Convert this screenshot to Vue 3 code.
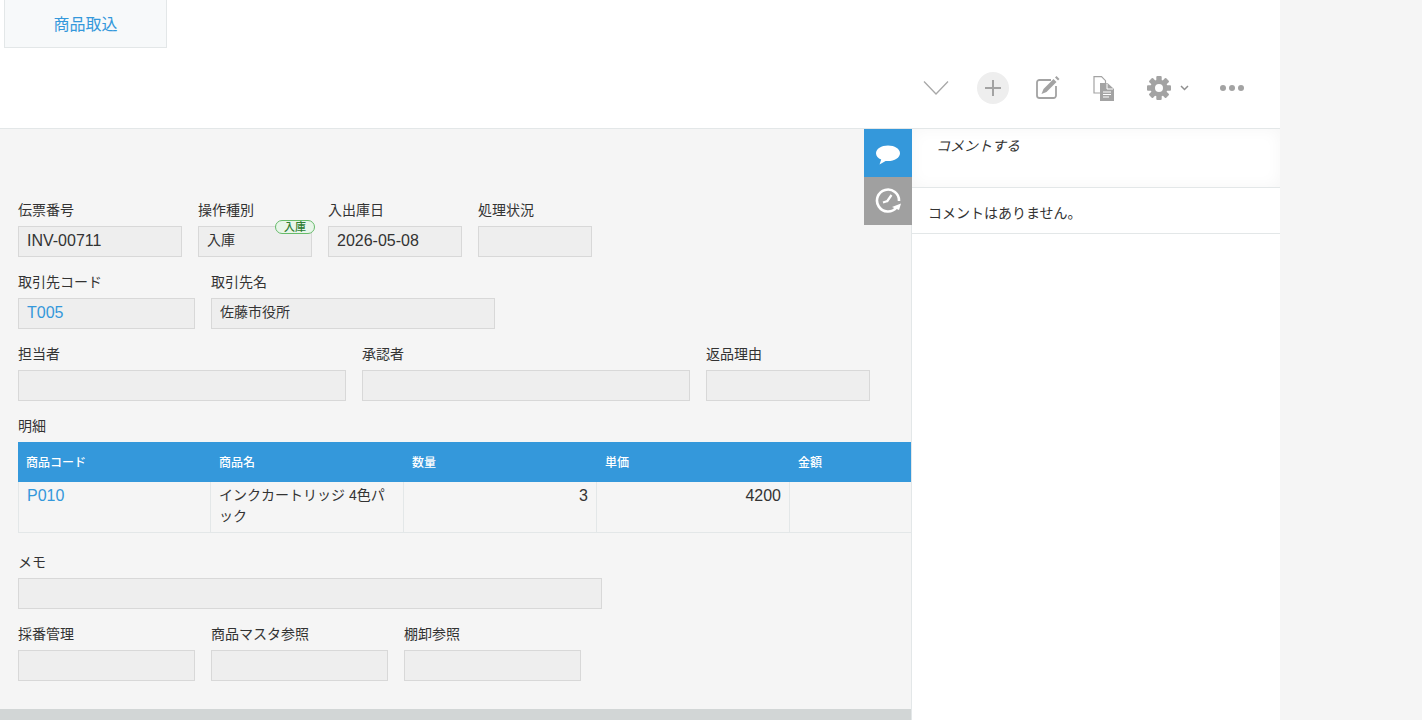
<template>
  <div class="page">
    <header class="top">
      <div class="tabs-row">
        <a class="import-btn">商品取込</a>
      </div>
      <div class="toolbar">
        <svg class="tool chevron" width="26" height="16" viewBox="0 0 26 16"><path d="M1 1.500 13 14 25 1.500" fill="none" stroke="#a8a8a8" stroke-width="1.300" /></svg>
        <span class="plus-circle">
          <svg width="18" height="18" viewBox="0 0 18 18"><path d="M9 1v16M1 9h16" stroke="#a3a3a3" stroke-width="2" fill="none" /></svg>
        </span>
        <svg class="tool edit" width="26" height="26" viewBox="0 0 26 26">
          <path d="M16 5H4.500A2.500 2.500 0 0 0 2 7.500v13A2.500 2.500 0 0 0 4.500 23h14a2.500 2.500 0 0 0 2.500-2.500V11" fill="none" stroke="#a3a3a3" stroke-width="1.800" />
          <path d="M6.500 19 8.500 14 18.500 4l3 3-10 10z" fill="#a3a3a3" />
          <path d="M20 2.500 21.500 1l3 3L23 5.500z" fill="#a3a3a3" />
        </svg>
        <svg class="tool doc" width="22" height="25" viewBox="0 0 22 25">
          <path d="M1 .7h7.500l4 4V17H1z" fill="#fff" stroke="#a3a3a3" stroke-width="1.200" />
          <path d="M7 7h7.500L21 13v12H7z" fill="#a3a3a3" />
          <path d="M14 7.500V13h6" fill="none" stroke="#fff" stroke-width="1" />
          <path d="M10 16h8M10 18.500h8M10 21h6" stroke="#fff" stroke-width="1.200" />
        </svg>
        <span class="gear-wrap">
          <svg width="24" height="24" viewBox="0 0 24 24">
            <circle cx="12" cy="12" r="6.300" fill="none" stroke="#a3a3a3" stroke-width="4.600" />
            <g fill="#a3a3a3">
              <rect x="9.300" y="0" width="5.400" height="5" rx="1" />
              <rect x="9.300" y="19" width="5.400" height="5" rx="1" />
              <rect x="0" y="9.300" width="5" height="5.400" rx="1" />
              <rect x="19" y="9.300" width="5" height="5.400" rx="1" />
              <rect x="9.300" y="0" width="5.400" height="5" rx="1" transform="rotate(45 12 12)" />
              <rect x="9.300" y="19" width="5.400" height="5" rx="1" transform="rotate(45 12 12)" />
              <rect x="0" y="9.300" width="5" height="5.400" rx="1" transform="rotate(45 12 12)" />
              <rect x="19" y="9.300" width="5" height="5.400" rx="1" transform="rotate(45 12 12)" />
            </g>
          </svg>
          <svg class="mini" width="9" height="6" viewBox="0 0 9 6"><path d="M1 1l3.500 3.500L8 1" fill="none" stroke="#8f8f8f" stroke-width="1.500" /></svg>
        </span>
        <svg class="tool dots" width="24" height="8" viewBox="0 0 24 8">
          <circle cx="3" cy="4" r="3" fill="#a3a3a3" />
          <circle cx="12" cy="4" r="3" fill="#a3a3a3" />
          <circle cx="21" cy="4" r="3" fill="#a3a3a3" />
        </svg>
      </div>
    </header>

    <div class="body">
      <main class="form">
        <div v-for="(row, i) in rows" :key="i" class="form-row">
          <div v-for="f in row" :key="f.label" class="field" :style="{ width: f.w + 'px' }">
            <div class="field-label">{{ f.label }}</div>
            <div class="field-value" :class="{ link: f.link, latin: f.latin }">{{ f.value }}</div>
            <span v-if="f.badge" class="badge">{{ f.badge }}</span>
          </div>
        </div>

        <div class="table-block">
          <div class="field-label">明細</div>
          <div class="table">
            <div class="thead">
              <div v-for="h in headers" :key="h" class="th">{{ h }}</div>
            </div>
            <div class="tbody">
              <div class="td link latin">P010</div>
              <div class="td">インクカートリッジ 4色パック</div>
              <div class="td num latin">3</div>
              <div class="td num latin">4200</div>
              <div class="td"></div>
            </div>
          </div>
        </div>

        <div v-for="(row, i) in rowsBottom" :key="'b' + i" class="form-row">
          <div v-for="f in row" :key="f.label" class="field" :style="{ width: f.w + 'px' }">
            <div class="field-label">{{ f.label }}</div>
            <div class="field-value"></div>
          </div>
        </div>

        <div class="footer-bar"></div>
      </main>

      <aside class="side">
        <div class="side-tabs">
          <div class="side-tab active">
            <svg width="26" height="22" viewBox="0 0 26 22">
              <path d="M13 1.500C6.400 1.500 1 4.900 1 9.200c0 2.700 2.100 5 5.200 6.400L4.500 20.500l6.100-3.600c.8.100 1.600.2 2.400.2 6.600 0 12-3.500 12-7.900S19.600 1.500 13 1.500z" fill="#fff" />
            </svg>
          </div>
          <div class="side-tab">
            <svg width="26" height="26" viewBox="0 0 26 26">
              <path d="M21.500 19.500A11 11 0 1 1 24 13" fill="none" stroke="#fff" stroke-width="2.600" />
              <path d="M26 15.500 24 22l-7-3z" fill="#fff" />
              <path d="M12 13.500 16.500 7M12.500 13 8 14.500" stroke="#fff" stroke-width="2.200" fill="none" />
            </svg>
          </div>
        </div>
        <div class="comment-box">
          <span class="comment-ph">コメントする</span>
        </div>
        <div class="no-comment">コメントはありません。</div>
      </aside>
    </div>
  </div>
</template>

<script setup>
const rows = [
  [
    { label: '伝票番号', value: 'INV-00711', w: 164, latin: true },
    { label: '操作種別', value: '入庫', w: 114, badge: '入庫' },
    { label: '入出庫日', value: '2026-05-08', w: 134, latin: true },
    { label: '処理状況', value: '', w: 114 }
  ],
  [
    { label: '取引先コード', value: 'T005', w: 177, link: true, latin: true },
    { label: '取引先名', value: '佐藤市役所', w: 284 }
  ],
  [
    { label: '担当者', value: '', w: 328 },
    { label: '承認者', value: '', w: 328 },
    { label: '返品理由', value: '', w: 164 }
  ]
]

const headers = ['商品コード', '商品名', '数量', '単価', '金額']

const rowsBottom = [
  [{ label: 'メモ', w: 584 }],
  [
    { label: '採番管理', w: 177 },
    { label: '商品マスタ参照', w: 177 },
    { label: '棚卸参照', w: 177 }
  ]
]
</script>

<style>
html,
body {
  margin: 0;
  background: #f5f5f5;
}
</style>

<style scoped>
.page {
  width: 1280px;
  height: 720px;
  overflow: hidden;
  background: #fff;
  font-family: "Liberation Sans", "Noto Sans CJK JP", sans-serif;
  font-size: 14px;
  color: #333;
}

.top {
  height: 128px;
  border-bottom: 1px solid #e3e7e8;
  display: flex;
  flex-direction: column;
  justify-content: space-between;
}

.tabs-row {
  padding-left: 4px;
}

.import-btn {
  display: block;
  width: 161px;
  height: 47px;
  line-height: 50px;
  text-align: center;
  background: #f7f9fa;
  border: 1px solid #e3e7e8;
  border-top: 0;
  color: #3498db;
  font-size: 16px;
}

.toolbar {
  display: flex;
  align-items: center;
  justify-content: flex-end;
  height: 32px;
  margin-bottom: 24px;
  padding-right: 36px;
}

.tool {
  flex: none;
}

.chevron {
  margin-right: 28px;
}

.plus-circle {
  width: 32px;
  height: 32px;
  border-radius: 50%;
  background: #eee;
  display: flex;
  align-items: center;
  justify-content: center;
  margin-right: 26px;
}

.edit {
  margin-right: 32px;
}

.doc {
  margin-right: 32px;
}

.gear-wrap {
  display: flex;
  align-items: center;
  margin-right: 31px;
}

.mini {
  margin-left: 9px;
}

.body {
  display: flex;
  height: 591px;
}

.form {
  position: relative;
  width: 911px;
  flex: none;
  overflow: hidden;
  box-sizing: content-box;
  background: #f5f5f5;
  border-right: 1px solid #e3e7e8;
  padding-top: 72px;
}

.form-row {
  display: flex;
  gap: 16px;
  padding-left: 18px;
  margin-bottom: 16px;
}

.field {
  position: relative;
  flex: none;
}

.field-label {
  height: 25px;
  line-height: 19px;
  font-size: 14px;
  color: #333;
}

.field-value {
  height: 31px;
  box-sizing: border-box;
  border: 1px solid #d8d8d8;
  background: #eee;
  padding: 0 8px;
  line-height: 27px;
  font-size: 14px;
  color: #333;
}

.latin {
  font-size: 16px;
}

.link {
  color: #3498db;
}

.badge {
  position: absolute;
  top: 19px;
  right: -3px;
  box-sizing: border-box;
  width: 40px;
  height: 14px;
  line-height: 13px;
  text-align: center;
  font-size: 11px;
  font-weight: 500;
  color: #2e7d32;
  background: #e8f5e9;
  border: 1px solid #66bb6a;
  border-radius: 8px;
}

.table-block {
  padding-left: 18px;
  margin-bottom: 20px;
}

.table {
  width: 965px;
}

.thead,
.tbody {
  display: grid;
  grid-template-columns: repeat(5, 193px);
}

.thead {
  height: 40px;
  background: #3498db;
}

.th {
  padding-left: 8px;
  line-height: 42px;
  font-size: 12px;
  font-weight: 500;
  color: #fff;
}

.tbody {
  height: 51px;
  box-sizing: border-box;
  border-bottom: 1px solid #e3e7e8;
}

.td {
  padding: 3px 8px 0;
  line-height: 21px;
  border-right: 1px solid #e3e7e8;
  font-size: 14px;
  box-sizing: border-box;
}

.td:first-child {
  border-left: 1px solid #e3e7e8;
}

.td.latin {
  font-size: 16px;
}

.num {
  text-align: right;
}

.footer-bar {
  position: absolute;
  left: 0;
  right: 0;
  bottom: 0;
  height: 11px;
  background: #d2d6d6;
}

.side {
  position: relative;
  flex: 1;
}

.side-tabs {
  position: absolute;
  left: -48px;
  top: 0;
  z-index: 2;
}

.side-tab {
  width: 48px;
  height: 48px;
  background: #a0a0a0;
  display: flex;
  align-items: center;
  justify-content: center;
}

.side-tab.active {
  background: #3498db;
  box-sizing: border-box;
  padding-top: 3px;
}

.comment-box {
  height: 59px;
  box-sizing: border-box;
  border-bottom: 1px solid #e3e7e8;
  padding: 7px 24px;
  box-shadow: inset 0 0 16px rgba(0, 0, 0, 0.04);
  line-height: 20px;
}

.comment-ph {
  font-size: 14px;
  font-style: italic;
  color: #333;
}

.no-comment {
  height: 46px;
  box-sizing: border-box;
  line-height: 50px;
  padding-left: 16px;
  border-bottom: 1px solid #e3e7e8;
  font-size: 14px;
}
</style>
